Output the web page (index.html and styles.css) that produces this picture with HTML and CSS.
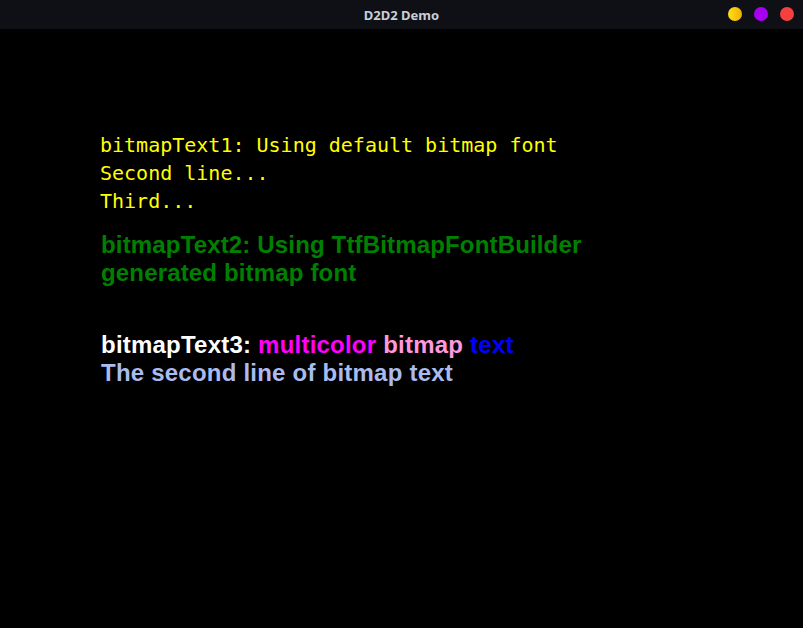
FILE: index.html
```html
<!DOCTYPE html>
<html>
<head>
<meta charset="utf-8">
<link rel="stylesheet" href="styles.css">
</head>
<body>
<div class="window">
  <header class="titlebar">
    <div class="title">D2D2 Demo</div>
    <div class="controls">
      <span class="dot dot-min"></span>
      <span class="dot dot-max"></span>
      <span class="dot dot-close"></span>
    </div>
  </header>
  <main class="canvas">
    <div class="text1">
      <div>bitmapText1: Using default bitmap font</div>
      <div>Second line...</div>
      <div>Third...</div>
    </div>
    <div class="text2">
      <div>bitmapText2: Using TtfBitmapFontBuilder</div>
      <div>generated bitmap font</div>
    </div>
    <div class="text3">
      <div><span class="white">bitmapText3: </span><span class="magenta">multicolor</span> <span class="pink">bitmap</span> <span class="blue">text</span></div>
      <div class="lavender">The second line of bitmap text</div>
    </div>
  </main>
</div>
</body>
</html>
```
FILE: styles.css
```css
html, body {
  margin: 0;
  padding: 0;
  background: #000;
}
.window {
  width: 803px;
  height: 628px;
  display: flex;
  flex-direction: column;
  background: #000;
  overflow: hidden;
}
.titlebar {
  height: 29px;
  flex: 0 0 29px;
  background: #0f1015;
  position: relative;
  display: flex;
  align-items: center;
  justify-content: center;
}
.title {
  font-family: "Noto Sans", "DejaVu Sans", sans-serif;
  font-weight: 700;
  font-size: 13px;
  color: #c9ced8;
}
.controls {
  position: absolute;
  right: 9px;
  top: 7px;
  display: flex;
  gap: 12px;
}
.dot {
  width: 14px;
  height: 14px;
  border-radius: 50%;
  display: block;
}
.dot-min { background: linear-gradient(90deg, #ffe01a, #f0b000); }
.dot-max { background: #a700f0; }
.dot-close { background: #f5403f; }
.canvas {
  flex: 1;
  background: #000;
  padding: 102px 0 0 100px;
}
.text1 {
  font-family: "DejaVu Sans Mono", monospace;
  font-size: 20px;
  line-height: 28px;
  color: #ffff00;
}
.text2 {
  margin-top: 16px;
  margin-left: 1px;
  font-family: "Liberation Sans", Arial, sans-serif;
  font-weight: 700;
  font-size: 24px;
  line-height: 28px;
  letter-spacing: 0.16px;
  color: #008000;
}
.text3 {
  margin-top: 44px;
  margin-left: 1px;
  font-family: "Liberation Sans", Arial, sans-serif;
  font-weight: 700;
  font-size: 24px;
  line-height: 28px;
  letter-spacing: 0.22px;
}
.white { color: #ffffff; }
.magenta { color: #ff00ff; }
.pink { color: #ff99dd; }
.blue { color: #0000ff; }
.lavender { color: #aabbee; }
```
